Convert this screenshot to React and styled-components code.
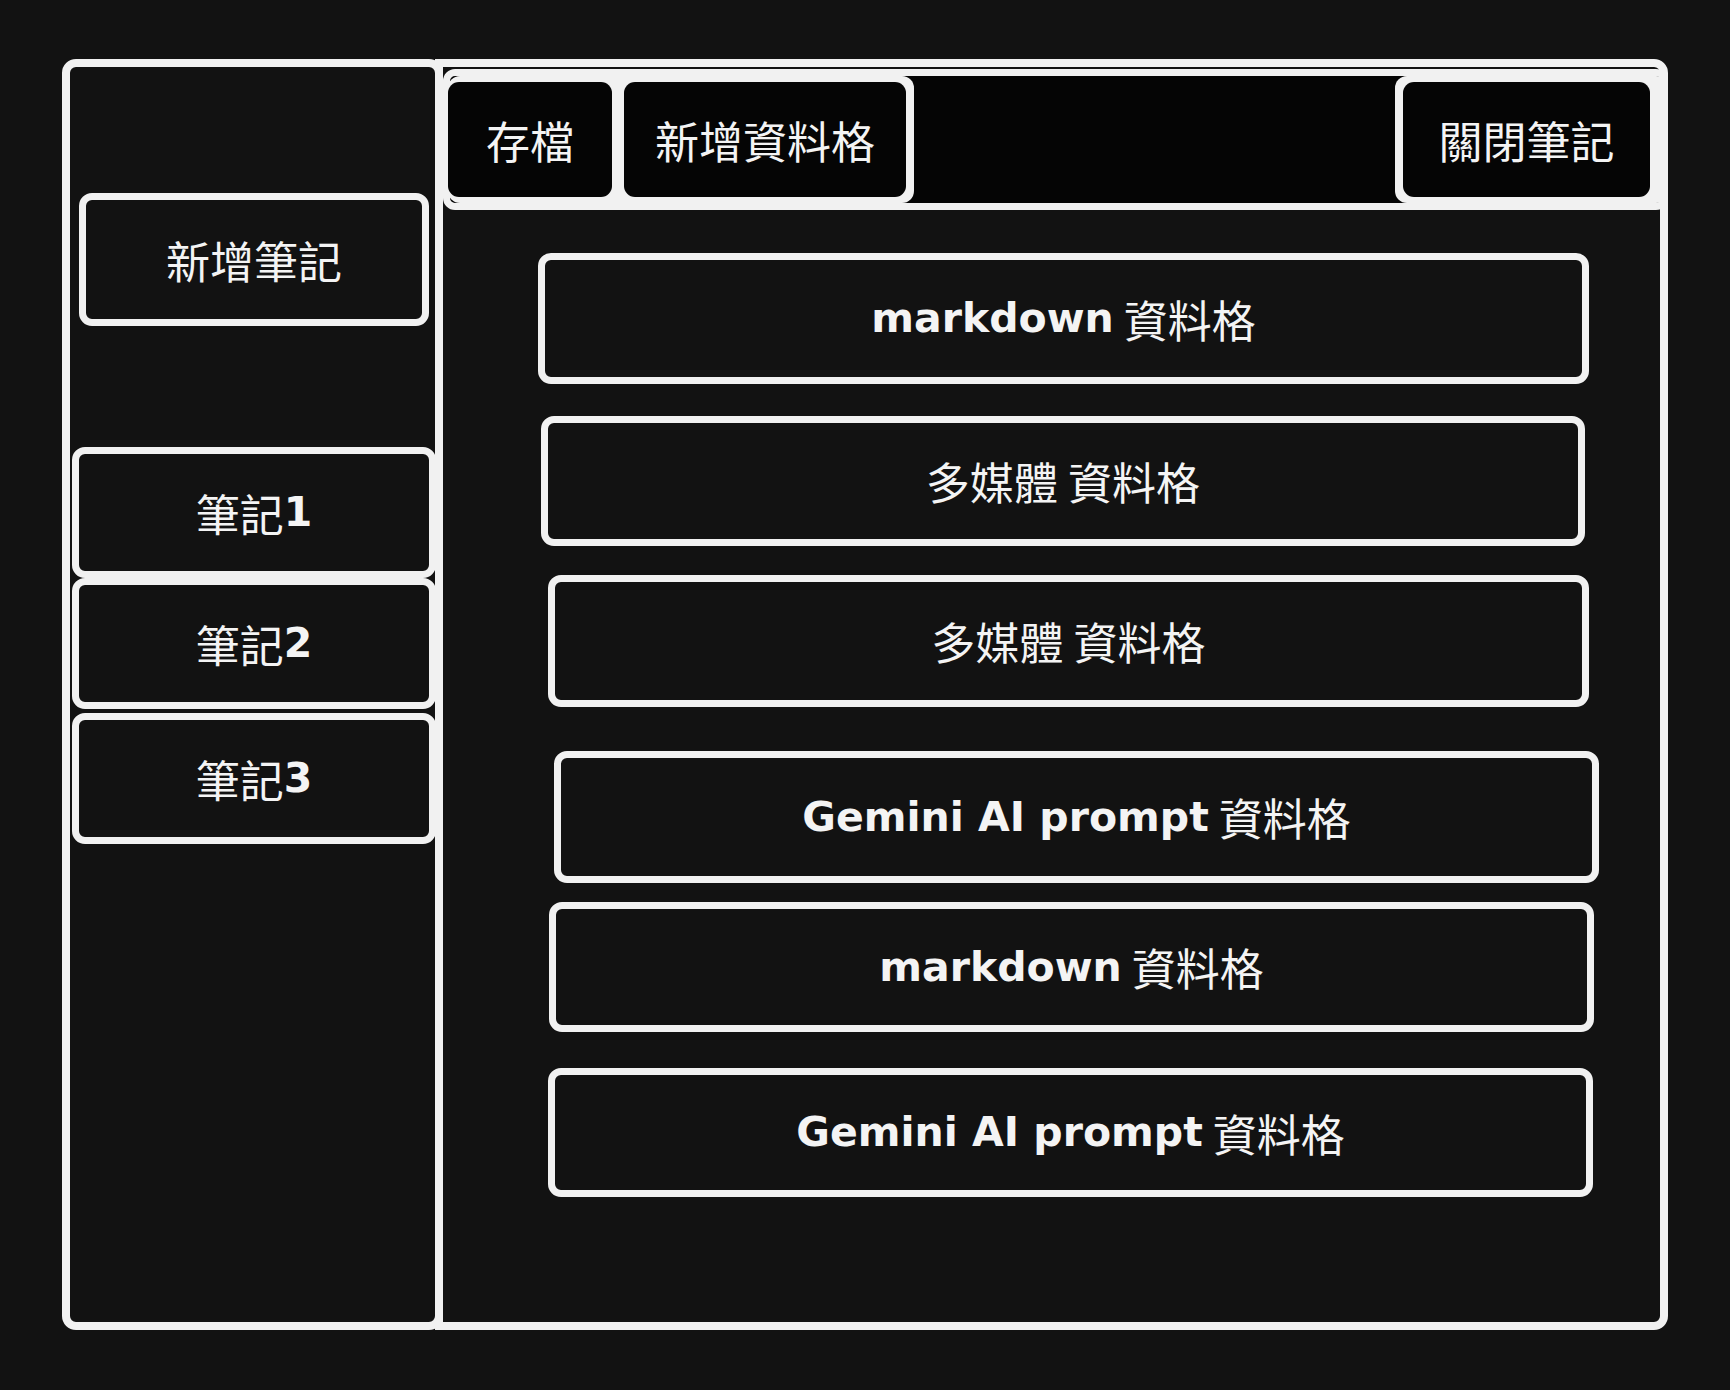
import React from "react";
import styled, { createGlobalStyle } from "styled-components";

const stroke = "#f1f1f1";
const canvas = "#121212";
const ink = "#050505";

const GlobalStyle = createGlobalStyle`
  html, body {
    margin: 0;
    padding: 0;
    background: ${canvas};
  }
  body {
    font-family: "Noto Sans CJK TC", "Noto Sans", sans-serif;
    color: #f4f4f4;
  }
`;

const Page = styled.div`
  width: 1730px;
  height: 1390px;
  box-sizing: border-box;
  padding: 59px 0 0 62px;
`;

const Frame = styled.div`
  display: flex;
  width: 1606px;
  height: 1271px;
`;

const Sidebar = styled.aside`
  box-sizing: border-box;
  width: 381px;
  height: 100%;
  border: 8px solid ${stroke};
  border-radius: 14px;
  background: ${canvas};
  display: flex;
  flex-direction: column;
  position: relative;
  z-index: 1;
`;

const SideItem = styled.div`
  box-sizing: border-box;
  width: ${(p) => p.$w}px;
  height: ${(p) => p.$h}px;
  margin-top: ${(p) => p.$top}px;
  margin-left: ${(p) => p.$left}px;
  border: 7px solid ${stroke};
  border-radius: 13px;
  background: ${canvas};
  display: flex;
  align-items: center;
  justify-content: center;
  font-size: 44px;
  line-height: 1;
`;

const Main = styled.main`
  box-sizing: border-box;
  flex: 1;
  margin-left: -8px;
  height: 100%;
  border: 8px solid ${stroke};
  border-radius: 0 14px 14px 0;
  padding-top: 2px;
  display: flex;
  flex-direction: column;
`;

const Toolbar = styled.div`
  box-sizing: border-box;
  height: 141px;
  margin-right: -8px;
  border: 7px solid ${stroke};
  border-radius: 12px;
  background: ${ink};
  display: flex;
  justify-content: space-between;
  align-items: stretch;
`;

const ButtonGroup = styled.div`
  display: flex;
  gap: 12px;
  padding: 6px 8px 6px 0;
  margin-left: -2px;
  background: ${stroke};
  border-radius: 12px;
`;

const RightGroup = styled(ButtonGroup)`
  padding: 6px 18px 6px 8px;
  margin-left: 0;
  margin-right: -7px;
`;

const ToolButton = styled.button`
  box-sizing: border-box;
  width: ${(p) => p.$w}px;
  height: 100%;
  border: none;
  border-radius: 11px;
  background: ${ink};
  color: #f4f4f4;
  font-family: "Noto Sans CJK TC", "Noto Sans", sans-serif;
  font-size: 44px;
  line-height: 1;
  padding: 0;
  display: flex;
  align-items: center;
  justify-content: center;
`;

const Cells = styled.div`
  display: flex;
  flex-direction: column;
`;

const Cell = styled.div`
  box-sizing: border-box;
  width: ${(p) => p.$w}px;
  height: ${(p) => p.$h}px;
  margin-top: ${(p) => p.$top}px;
  margin-left: ${(p) => p.$left}px;
  border: 7px solid ${stroke};
  border-radius: 13px;
  background: ${canvas};
  display: flex;
  align-items: center;
  justify-content: center;
  font-size: 44px;
  line-height: 1;
  white-space: pre;
`;

const Hand = styled.span`
  font-family: "DejaVu Sans", "Liberation Sans", sans-serif;
  font-weight: 700;
  font-size: 41px;
`;

const notes = [
  { label: "筆記", n: "1", top: 121, h: 131 },
  { label: "筆記", n: "2", top: 0, h: 131 },
  { label: "筆記", n: "3", top: 4, h: 131 },
];

const cells = [
  { latin: "markdown", left: 95, w: 1051, top: 43, h: 131 },
  { cjk: "多媒體", left: 98, w: 1044, top: 32, h: 130 },
  { cjk: "多媒體", left: 105, w: 1041, top: 29, h: 132 },
  { latin: "Gemini AI prompt", left: 111, w: 1045, top: 44, h: 132 },
  { latin: "markdown", left: 106, w: 1045, top: 19, h: 130 },
  { latin: "Gemini AI prompt", left: 105, w: 1045, top: 36, h: 129 },
];

export default function App() {
  return (
    <>
      <GlobalStyle />
      <Page>
        <Frame>
          <Sidebar>
            <SideItem $w={350} $h={133} $top={126} $left={9}>
              新增筆記
            </SideItem>
            {notes.map((note) => (
              <SideItem key={note.n} $w={364} $h={note.h} $top={note.top} $left={2}>
                {note.label}
                <Hand>{note.n}</Hand>
              </SideItem>
            ))}
          </Sidebar>
          <Main>
            <Toolbar>
              <ButtonGroup>
                <ToolButton $w={164}>存檔</ToolButton>
                <ToolButton $w={282}>新增資料格</ToolButton>
              </ButtonGroup>
              <RightGroup>
                <ToolButton $w={247}>關閉筆記</ToolButton>
              </RightGroup>
            </Toolbar>
            <Cells>
              {cells.map((cell, i) => (
                <Cell key={i} $w={cell.w} $h={cell.h} $top={cell.top} $left={cell.left}>
                  {cell.latin ? <Hand>{cell.latin}</Hand> : cell.cjk}
                  {" 資料格"}
                </Cell>
              ))}
            </Cells>
          </Main>
        </Frame>
      </Page>
    </>
  );
}
